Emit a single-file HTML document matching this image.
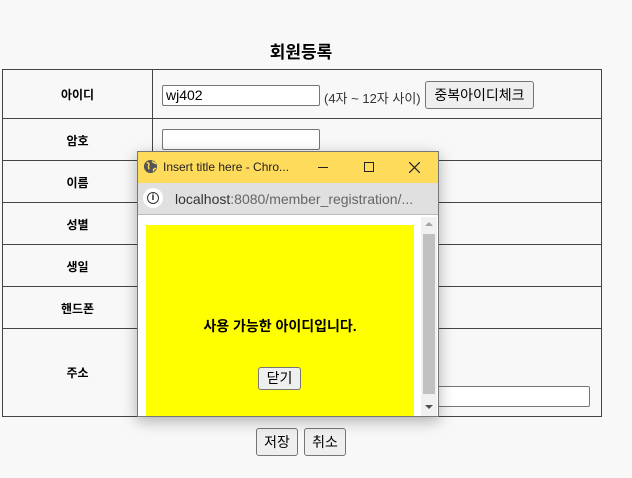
<!DOCTYPE html>
<html><head><meta charset="utf-8"><style>
*{box-sizing:border-box;margin:0;padding:0}
body{width:632px;height:478px;background:#f8f8f8;position:relative;overflow:hidden;font-family:"Liberation Sans","Noto Sans CJK KR",sans-serif;color:#000}
.a{position:absolute}
.h{height:1px;background:#444;left:2px;width:600px}
.v{width:1px;background:#444}
.lab{left:3px;width:149px;text-align:center;font-size:12px;font-weight:bold}
.inp{background:#fff;border:1px solid #767676;border-radius:2px}
.btn{background:#efefef;border:1px solid #767676;border-radius:3px;font-size:14px;text-align:center}
</style></head><body>
<div class="a" style="left:0;width:602px;top:38px;text-align:center;font-size:17px;font-weight:bold">회원등록</div>
<div class="a h" style="top:69px"></div>
<div class="a h" style="top:118px"></div>
<div class="a h" style="top:160px"></div>
<div class="a h" style="top:202px"></div>
<div class="a h" style="top:244px"></div>
<div class="a h" style="top:286px"></div>
<div class="a h" style="top:328px"></div>
<div class="a h" style="top:416px"></div>
<div class="a v" style="left:2px;top:69px;height:348px"></div>
<div class="a v" style="left:152px;top:69px;height:348px"></div>
<div class="a v" style="left:601px;top:69px;height:348px"></div>
<div class="a lab" style="top:86px">아이디</div>
<div class="a lab" style="top:132px">암호</div>
<div class="a lab" style="top:174px">이름</div>
<div class="a lab" style="top:216px">성별</div>
<div class="a lab" style="top:258px">생일</div>
<div class="a lab" style="top:300px">핸드폰</div>
<div class="a lab" style="top:364px">주소</div>
<div class="a inp" style="left:162px;top:85px;width:158px;height:21px;font-size:14px;padding:1px 3px">wj402</div>
<div class="a" style="left:324px;top:88px;font-size:13px;color:#333">(4자 ~ 12자 사이)</div>
<div class="a btn" style="left:425px;top:81px;width:109px;height:28px;line-height:26px">중복아이디체크</div>
<div class="a inp" style="left:162px;top:129px;width:158px;height:21px"></div>
<div class="a inp" style="left:430px;top:386px;width:160px;height:21px"></div>
<div class="a btn" style="left:256px;top:428px;width:42px;height:28px;line-height:26px">저장</div>
<div class="a btn" style="left:304px;top:428px;width:42px;height:28px;line-height:26px">취소</div>
<!-- popup -->
<div class="a" style="left:137px;top:151px;width:302px;height:266px;border:1px solid #777;background:#fff;box-shadow:0 4px 14px rgba(0,0,0,.3)">
 <div class="a" style="left:0;top:0;width:300px;height:31px;background:#ffdb5c">
  <svg class="a" style="left:5px;top:7px" width="15" height="15" viewBox="0 0 16 16"><circle cx="8" cy="8" r="7" fill="#555"/><path d="M4 4c2 0 3 1 2 3s1 2 0 4M10 2c0 2 2 2 4 3M11 13c0-2 1-3 3-3" stroke="#ffdb5c" stroke-width="1.5" fill="none"/></svg>
  <div class="a" style="left:25px;top:8px;font-size:12px;color:#222">Insert title here - Chro...</div>
  <div class="a" style="left:180px;top:15px;width:10px;height:1px;background:#222"></div>
  <div class="a" style="left:226px;top:10px;width:10px;height:10px;border:1px solid #222"></div>
  <svg class="a" style="left:271px;top:10px" width="11" height="11"><path d="M0 0L11 11M11 0L0 11" stroke="#222" stroke-width="1.2"/></svg>
 </div>
 <div class="a" style="left:0;top:31px;width:300px;height:32px;background:#e0e0e0;border-bottom:1px solid #bbb">
  <div class="a" style="left:5px;top:5px;width:20px;height:20px;border-radius:50%;background:#fff"></div>
  <div class="a" style="left:9px;top:9px;width:12px;height:12px;border-radius:50%;border:1.5px solid #333;font-size:9px;font-weight:bold;text-align:center;line-height:9px">i</div>
  <div class="a" style="left:37px;top:8px;font-size:14px;color:#666"><span style="color:#333">localhost</span>:8080/member_registration/...</div>
 </div>
 <div class="a" style="left:8px;top:73px;width:268px;height:191px;background:#ff0">
  <div class="a" style="left:0;width:268px;top:91px;text-align:center;font-size:14px;font-weight:bold">사용 가능한 아이디입니다.</div>
  <div class="a btn" style="left:112px;top:142px;width:43px;height:23px;line-height:21px">닫기</div>
 </div>
 <div class="a" style="left:283px;top:65px;width:16px;height:199px;background:#f1f1f1">
  <div class="a" style="left:4px;top:5px;border:4px solid transparent;border-bottom:4px solid #a3a3a3;border-top:0"></div>
  <div class="a" style="left:2px;top:17px;width:12px;height:160px;background:#c1c1c1"></div>
  <div class="a" style="left:4px;top:188px;border:4px solid transparent;border-top:4px solid #505050;border-bottom:0"></div>
 </div>
</div>
</body></html>
